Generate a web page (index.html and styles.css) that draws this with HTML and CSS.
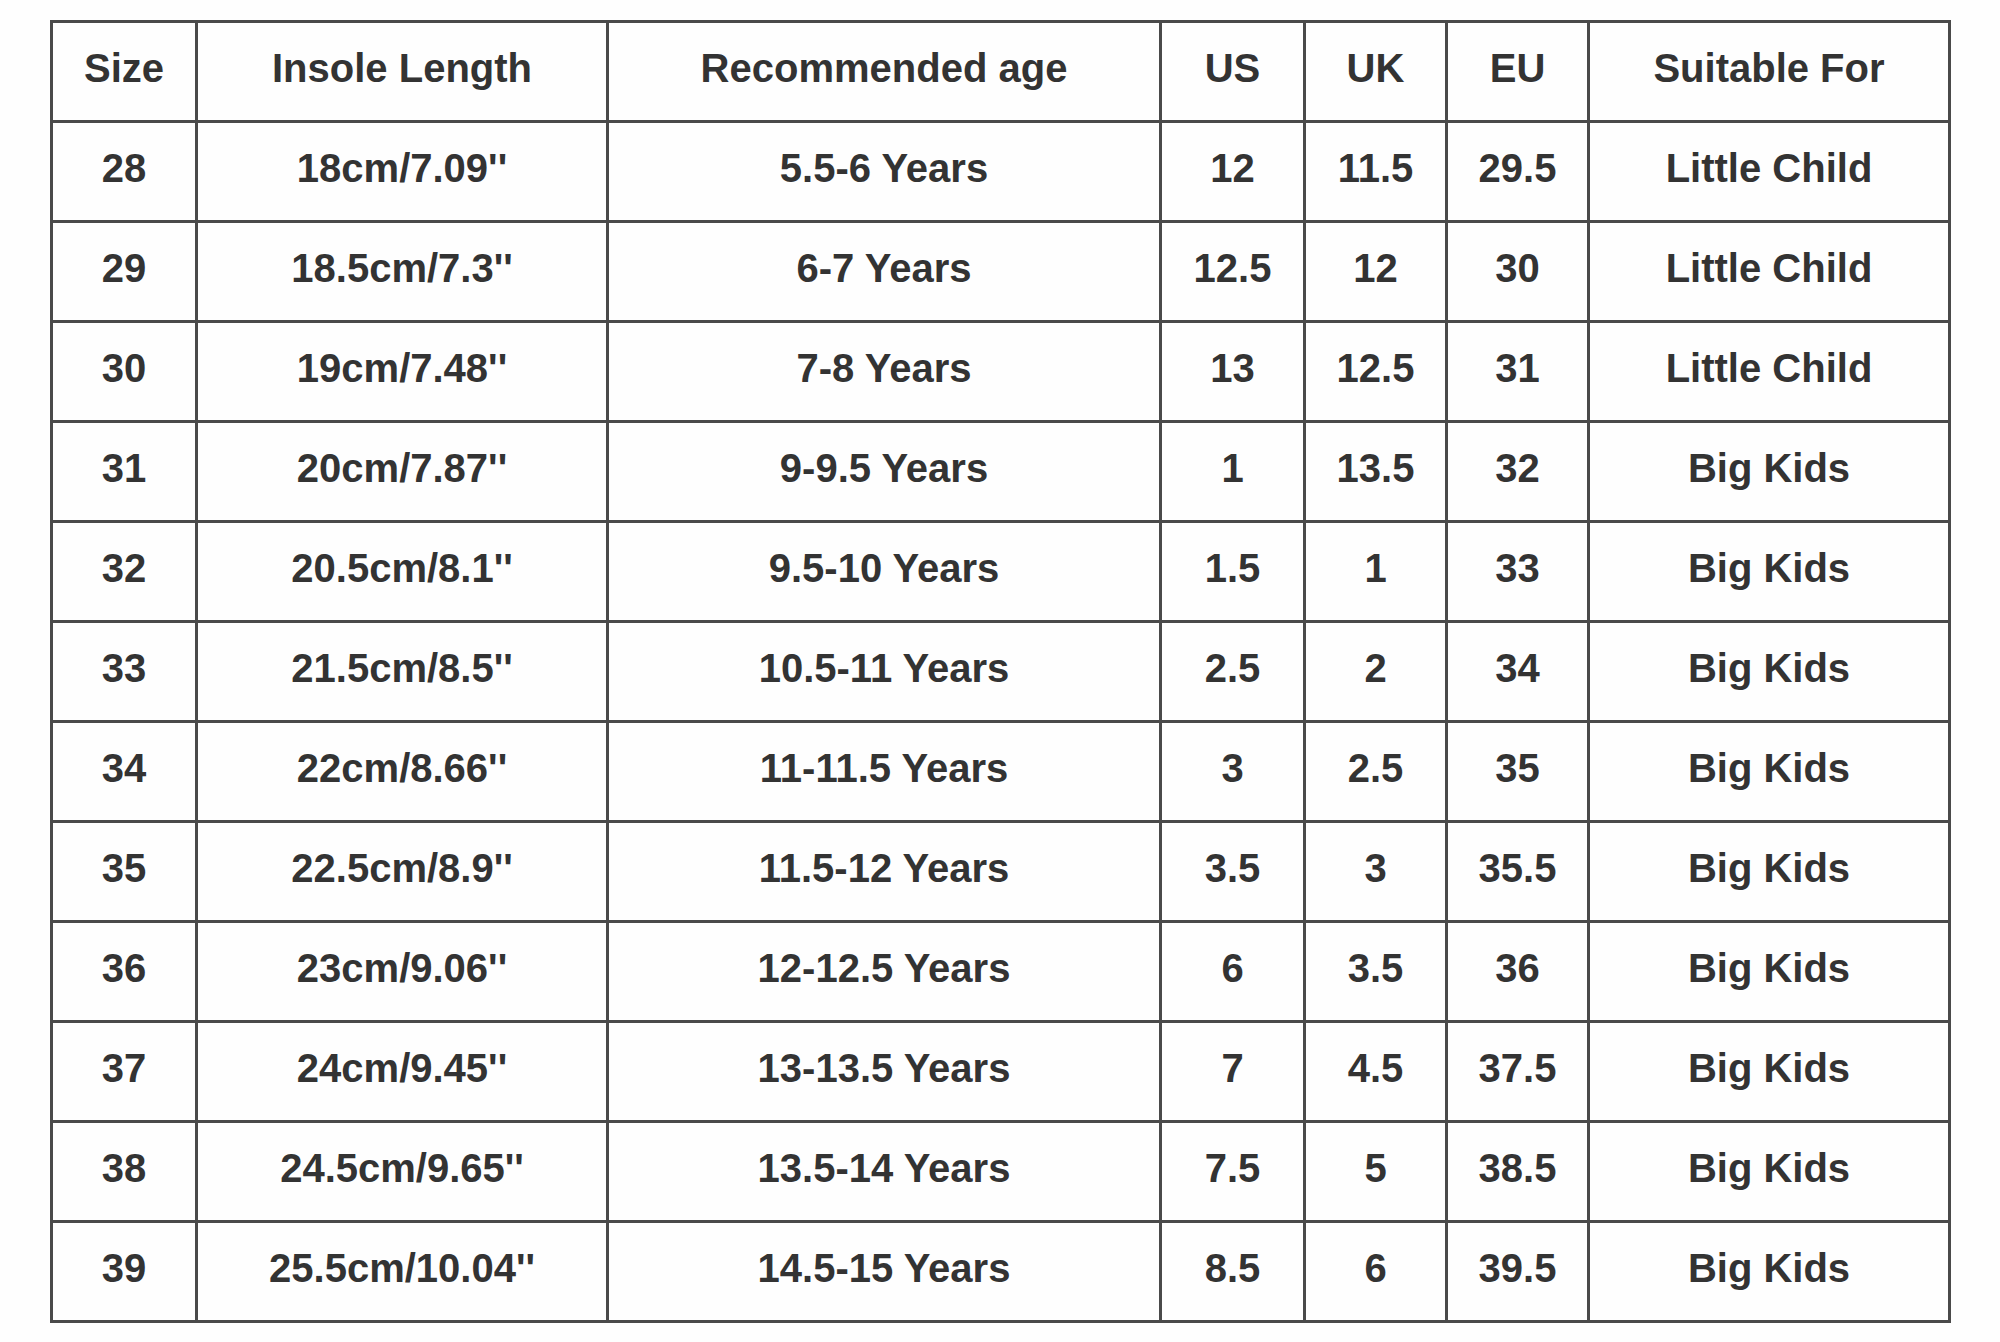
FILE: index.html
```html
<!DOCTYPE html>
<html>
<head>
<meta charset="utf-8">
<link rel="stylesheet" href="styles.css">
</head>
<body>
<div class="page">
<table class="size-chart">
<colgroup>
<col class="c-size"><col class="c-insole"><col class="c-age"><col class="c-us"><col class="c-uk"><col class="c-eu"><col class="c-for">
</colgroup>
<thead>
<tr><th>Size</th><th>Insole Length</th><th>Recommended age</th><th>US</th><th>UK</th><th>EU</th><th>Suitable For</th></tr>
</thead>
<tbody>
<tr><td>28</td><td>18cm/7.09''</td><td>5.5-6 Years</td><td>12</td><td>11.5</td><td>29.5</td><td>Little Child</td></tr>
<tr><td>29</td><td>18.5cm/7.3''</td><td>6-7 Years</td><td>12.5</td><td>12</td><td>30</td><td>Little Child</td></tr>
<tr><td>30</td><td>19cm/7.48''</td><td>7-8 Years</td><td>13</td><td>12.5</td><td>31</td><td>Little Child</td></tr>
<tr><td>31</td><td>20cm/7.87''</td><td>9-9.5 Years</td><td>1</td><td>13.5</td><td>32</td><td>Big Kids</td></tr>
<tr><td>32</td><td>20.5cm/8.1''</td><td>9.5-10 Years</td><td>1.5</td><td>1</td><td>33</td><td>Big Kids</td></tr>
<tr><td>33</td><td>21.5cm/8.5''</td><td>10.5-11 Years</td><td>2.5</td><td>2</td><td>34</td><td>Big Kids</td></tr>
<tr><td>34</td><td>22cm/8.66''</td><td>11-11.5 Years</td><td>3</td><td>2.5</td><td>35</td><td>Big Kids</td></tr>
<tr><td>35</td><td>22.5cm/8.9''</td><td>11.5-12 Years</td><td>3.5</td><td>3</td><td>35.5</td><td>Big Kids</td></tr>
<tr><td>36</td><td>23cm/9.06''</td><td>12-12.5 Years</td><td>6</td><td>3.5</td><td>36</td><td>Big Kids</td></tr>
<tr><td>37</td><td>24cm/9.45''</td><td>13-13.5 Years</td><td>7</td><td>4.5</td><td>37.5</td><td>Big Kids</td></tr>
<tr><td>38</td><td>24.5cm/9.65''</td><td>13.5-14 Years</td><td>7.5</td><td>5</td><td>38.5</td><td>Big Kids</td></tr>
<tr><td>39</td><td>25.5cm/10.04''</td><td>14.5-15 Years</td><td>8.5</td><td>6</td><td>39.5</td><td>Big Kids</td></tr>
</tbody>
</table>
</div>
</body>
</html>
```
FILE: styles.css
```css
html, body {
  margin: 0;
  padding: 0;
  background: #fefefe;
}
.page {
  padding: 20px 0 0 50px;
}
.size-chart {
  border-collapse: collapse;
  table-layout: fixed;
  width: 1898px;
  border: 3px solid #666;
  font-family: "Liberation Sans", Arial, sans-serif;
  font-weight: bold;
  font-size: 40px;
  color: #333;
}
.c-size { width: 145px; }
.c-insole { width: 411px; }
.c-age { width: 553px; }
.c-us { width: 144px; }
.c-uk { width: 142px; }
.c-eu { width: 142px; }
.c-for { width: 361px; }
.size-chart th,
.size-chart td {
  border: 3px solid #4a4a4a;
  height: 100px;
  padding: 0 0 6px 0;
  box-sizing: border-box;
  text-align: center;
  vertical-align: middle;
  font-weight: bold;
  white-space: nowrap;
}
```
